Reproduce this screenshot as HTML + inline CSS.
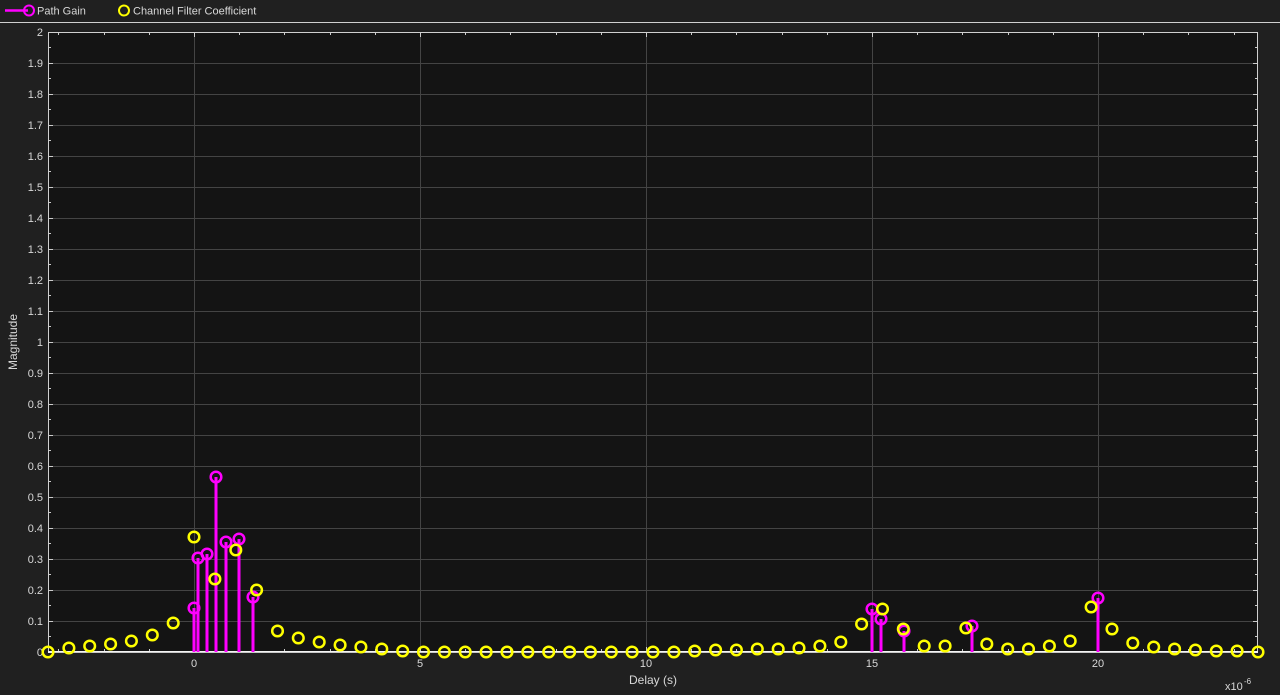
<!DOCTYPE html>
<html><head><meta charset="utf-8"><style>
html,body{margin:0;padding:0;background:#202020;width:1280px;height:695px;overflow:hidden;font-family:"Liberation Sans",Arial,sans-serif}
svg{display:block}
text{font-family:"Liberation Sans",Arial,sans-serif;fill:#d8d8d8}
</style></head><body>
<svg id="s" width="1280" height="695" xmlns="http://www.w3.org/2000/svg">
<rect x="0" y="0" width="1280" height="695" fill="#202020"/>
<line x1="0" y1="22.5" x2="1280" y2="22.5" stroke="#cfcfcf" stroke-width="1"/>
<line x1="5" y1="10.5" x2="28" y2="10.5" stroke="#ff00ff" stroke-width="2.5"/>
<circle cx="29" cy="10.5" r="5" fill="none" stroke="#ff00ff" stroke-width="2"/>
<text x="37" y="14.5" font-size="11">Path Gain</text>
<circle cx="124" cy="10.5" r="5" fill="none" stroke="#ffff00" stroke-width="2"/>
<text x="133" y="14.5" font-size="11">Channel Filter Coefficient</text>
<rect x="48" y="32" width="1210" height="620" fill="#141414"/>
<g id="g"></g>
<text x="17" y="342" font-size="12" transform="rotate(-90 17 342)" text-anchor="middle">Magnitude</text>
<text x="653" y="684" font-size="12" text-anchor="middle">Delay (s)</text>
<text x="1225" y="690" font-size="11">x10</text><text x="1244" y="684" font-size="8">-6</text>
</svg>
<script>
var g=document.getElementById('g'),h='';
var X0=194,PX=45.2,Y0=652,PY=310;
// grid
for(var i=1;i<20;i++){var y=Y0-i*31;h+='<line x1="48" x2="1258" y1="'+(y+.5)+'" y2="'+(y+.5)+'" stroke="#444" stroke-width="1"/>';}
[0,5,10,15,20].forEach(function(v){var x=Math.round(X0+v*PX);h+='<line x1="'+(x+.5)+'" x2="'+(x+.5)+'" y1="32" y2="652" stroke="#444"/>';h+='<text x="'+(x)+'" y="667" font-size="11" text-anchor="middle">'+v+'</text>';});
for(var i=0;i<=20;i++){var y=Y0-i*31;var l=(i/10).toString();h+='<text x="43" y="'+(y+4)+'" font-size="11" text-anchor="end">'+l+'</text>';h+='<line x1="48" x2="53" y1="'+(y+.5)+'" y2="'+(y+.5)+'" stroke="#ccc"/><line x1="1253" x2="1258" y1="'+(y+.5)+'" y2="'+(y+.5)+'" stroke="#ccc"/>';
 if(i<20){var ym=y-15.5;h+='<line x1="48" x2="51" y1="'+ym+'" y2="'+ym+'" stroke="#ccc"/><line x1="1255" x2="1258" y1="'+ym+'" y2="'+ym+'" stroke="#ccc"/>';}}
for(var v=-3;v<=23;v++){var x=Math.round(X0+v*PX)+.5;if(x<48||x>1258)continue;var L=(v%5==0)?5:3;h+='<line x1="'+x+'" x2="'+x+'" y1="652" y2="'+(652-L)+'" stroke="#ccc"/><line x1="'+x+'" x2="'+x+'" y1="32" y2="'+(32+L)+'" stroke="#ccc"/>';}
h+='<rect x="48.5" y="32.5" width="1209" height="619" fill="none" stroke="#d0d0d0"/>';
h+='<line x1="48" x2="1258" y1="652" y2="652" stroke="#fff" stroke-width="1.5"/>';
// stems
var m=[[194,608],[198,558],[207,554],[216,477],[226,542],[239,539],[253,597],[872,609],[881,619],[904,631],[972,626],[1098,598]];
m.forEach(function(p){h+='<line x1="'+p[0]+'" x2="'+p[0]+'" y1="'+p[1]+'" y2="652" stroke="#ff00ff" stroke-width="3"/>';});
m.forEach(function(p){h+='<circle cx="'+p[0]+'" cy="'+p[1]+'" r="5.3" fill="none" stroke="#ff00ff" stroke-width="2.5"/>';});
var ys=[652,648,646,644,641,635,623,537,579,550,590,631,638,642,645,647,649,651,652,652,652,652,652,652,652,652,652,652,652,652,652,651,650,650,649,649,648,646,642,624,609,629,646,646,628,644,649,649,646,641,607,629,643,647,649,650,651,651,652];
for(var i=0;i<ys.length;i++){var x=48+i*(1210/58);h+='<circle cx="'+x.toFixed(1)+'" cy="'+ys[i]+'" r="5.3" fill="none" stroke="#ffff00" stroke-width="2.5"/>';}
g.innerHTML=h;
</script>
</body></html>
